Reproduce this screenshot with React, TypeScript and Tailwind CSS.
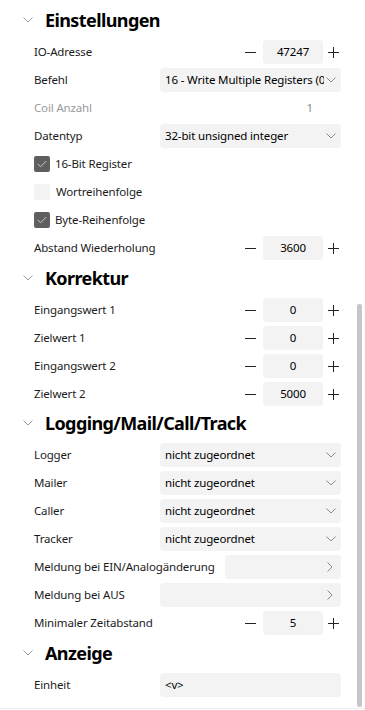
import type { ReactNode } from 'react';

type Row =
  | { kind: 'stepper'; label: string; value: string }
  | { kind: 'select'; label: string; value: string }
  | { kind: 'link'; label: string }
  | { kind: 'text'; label: string; value: string }
  | { kind: 'readonly'; label: string; value: string }
  | { kind: 'check'; label: string; checked: boolean };

const sections: { title: string; head: string; rows: Row[] }[] = [
  {
    title: 'Einstellungen',
    head: 'h-[34px]',
    rows: [
      { kind: 'stepper', label: 'IO-Adresse', value: '47247' },
      { kind: 'select', label: 'Befehl', value: '16 - Write Multiple Registers (0x10)' },
      { kind: 'readonly', label: 'Coil Anzahl', value: '1' },
      { kind: 'select', label: 'Datentyp', value: '32-bit unsigned integer' },
      { kind: 'check', label: '16-Bit Register', checked: true },
      { kind: 'check', label: 'Wortreihenfolge', checked: false },
      { kind: 'check', label: 'Byte-Reihenfolge', checked: true },
      { kind: 'stepper', label: 'Abstand Wiederholung', value: '3600' }
    ]
  },
  {
    title: 'Korrektur',
    head: 'h-[34px]',
    rows: [
      { kind: 'stepper', label: 'Eingangswert 1', value: '0' },
      { kind: 'stepper', label: 'Zielwert 1', value: '0' },
      { kind: 'stepper', label: 'Eingangswert 2', value: '0' },
      { kind: 'stepper', label: 'Zielwert 2', value: '5000' }
    ]
  },
  {
    title: 'Logging/Mail/Call/Track',
    head: 'h-[33px]',
    rows: [
      { kind: 'select', label: 'Logger', value: 'nicht zugeordnet' },
      { kind: 'select', label: 'Mailer', value: 'nicht zugeordnet' },
      { kind: 'select', label: 'Caller', value: 'nicht zugeordnet' },
      { kind: 'select', label: 'Tracker', value: 'nicht zugeordnet' },
      { kind: 'link', label: 'Meldung bei EIN/Analogänderung' },
      { kind: 'link', label: 'Meldung bei AUS' },
      { kind: 'stepper', label: 'Minimaler Zeitabstand', value: '5' }
    ]
  },
  {
    title: 'Anzeige',
    head: 'h-[34px]',
    rows: [{ kind: 'text', label: 'Einheit', value: '<v>' }]
  }
];

function ChevronDown({ className }: { className?: string }) {
  return (
    <svg width="10" height="6" viewBox="0 0 10 6" className={className} fill="none">
      <path d="M0.5 0.5 L5 5 L9.5 0.5" stroke="currentColor" strokeWidth="1" />
    </svg>
  );
}

function ChevronRight() {
  return (
    <svg width="6" height="10" viewBox="0 0 6 10" fill="none" className="text-[#8a8a8a]">
      <path d="M0.5 0.5 L5 5 L0.5 9.5" stroke="currentColor" strokeWidth="1" />
    </svg>
  );
}

function Label({ children, muted }: { children: ReactNode; muted?: boolean }) {
  return (
    <span className={`mr-[10px] min-w-[116px] whitespace-nowrap ${muted ? 'text-[#9a9a9a]' : 'text-[#1b1b1b]'}`}>
      {children}
    </span>
  );
}

function Stepper({ value }: { value: string }) {
  return (
    <div className="ml-auto flex items-center">
      <span className="mr-[4px] flex w-[18px] justify-center">
        <svg width="11" height="1" viewBox="0 0 11 1">
          <rect width="11" height="1" fill="#222" />
        </svg>
      </span>
      <span className="flex h-[24px] w-[60px] items-center justify-center rounded-[4px] bg-[#f3f3f3] text-black">
        {value}
      </span>
      <span className="flex w-[18px] justify-end pr-[2px]">
        <svg width="11" height="11" viewBox="0 0 11 11">
          <rect x="0" y="5" width="11" height="1" fill="#222" />
          <rect x="5" y="0" width="1" height="11" fill="#222" />
        </svg>
      </span>
    </div>
  );
}

function Field({ row }: { row: Row }) {
  switch (row.kind) {
    case 'stepper':
      return (
        <>
          <Label>{row.label}</Label>
          <Stepper value={row.value} />
        </>
      );
    case 'select':
      return (
        <>
          <Label>{row.label}</Label>
          <div className="flex h-[24px] min-w-0 flex-1 items-center rounded-[4px] bg-[#f3f3f3] pl-[5px] pr-[3px]">
            <span className="min-w-0 flex-1 overflow-hidden whitespace-nowrap text-black">{row.value}</span>
            <ChevronDown className="ml-[2px] mr-[2px] shrink-0 text-[#8a8a8a]" />
          </div>
        </>
      );
    case 'link':
      return (
        <>
          <Label>{row.label}</Label>
          <div className="flex h-[24px] min-w-0 flex-1 items-center justify-end rounded-[4px] bg-[#f3f3f3] pr-[8px]">
            <ChevronRight />
          </div>
        </>
      );
    case 'text':
      return (
        <>
          <Label>{row.label}</Label>
          <div className="flex h-[24px] min-w-0 flex-1 items-center rounded-[4px] bg-[#f3f3f3] pl-[5px] text-black">
            {row.value}
          </div>
        </>
      );
    case 'readonly':
      return (
        <>
          <Label muted>{row.label}</Label>
          <span className="ml-auto pr-[28px] text-[#8a8a8a]">{row.value}</span>
        </>
      );
    case 'check':
      return (
        <div className="flex items-center">
          {row.checked ? (
            <span className="mr-[5px] flex h-[16px] w-[16px] items-center justify-center rounded-[2px] bg-[#5f5f5f]">
              <svg width="10" height="8" viewBox="0 0 10 8" fill="none">
                <path d="M0.8 4 L3.6 6.8 L9.2 1" stroke="#c9c9c9" strokeWidth="1" />
              </svg>
            </span>
          ) : (
            <span className="mr-[6px] h-[16px] w-[16px] rounded-[2px] bg-[#f3f3f3]" />
          )}
          <span className="text-[#1b1b1b]">{row.label}</span>
        </div>
      );
  }
}

export default function App() {
  return (
    <div
      className="relative h-[710px] w-[365px] overflow-hidden bg-white text-[11.5px] tracking-[-0.15px]"
      style={{ fontFamily: '"Noto Sans", "Open Sans", sans-serif' }}
    >
      <div className="pt-[4px]">
        {sections.map((section) => (
          <section key={section.title}>
            <div className={`flex items-center pb-[3px] pl-[23px] ${section.head}`}>
              <ChevronDown className="mr-[12px] text-[#9a9a9a]" />
              <h2 className="text-[18px] font-bold leading-none tracking-[-0.6px] text-black">{section.title}</h2>
            </div>
            {section.rows.map((row) => (
              <div key={row.label} className="flex h-[28px] items-center pl-[34px] pr-[24px]">
                <Field row={row} />
              </div>
            ))}
          </section>
        ))}
      </div>
      <div className="absolute right-[3px] top-[304px] h-[403px] w-[5px] rounded-[2px] bg-[#c6c6c6]" />
      <div className="absolute left-0 right-0 top-[708px] h-px bg-[#ececec]" />
    </div>
  );
}
